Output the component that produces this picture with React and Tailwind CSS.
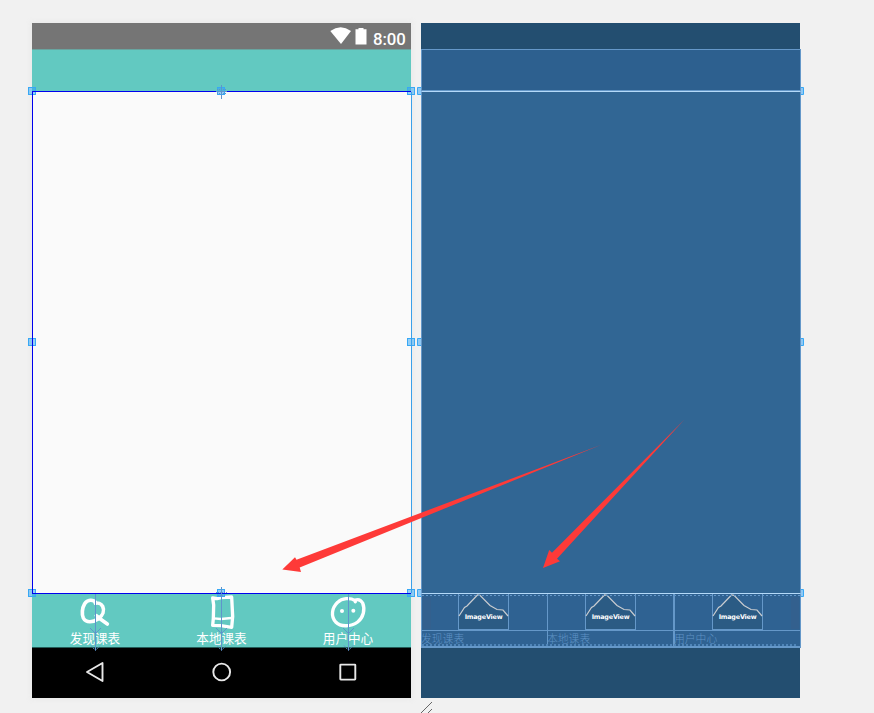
import React from "react";

const tabs = [
  { label: "发现课表", kind: "search" },
  { label: "本地课表", kind: "book" },
  { label: "用户中心", kind: "face" },
];

function TabIcon({ kind }) {
  const common = {
    className: "block h-[36px] w-[50px] shrink-0",
    fill: "none",
    stroke: "white",
    strokeLinecap: "round",
    strokeLinejoin: "round",
  };
  if (kind === "search")
    return (
      <svg viewBox="150 42 150 108" {...common} strokeWidth="11">
        <path d="M228 68C219 57 202 59 194 71C186 84 185 103 190 114C198 130 220 127 234 117C249 106 254 91 248 79C243 70 233 68 226 70" />
        <path d="M229 107L241 117L262 132" />
      </svg>
    );
  if (kind === "book")
    return (
      <svg viewBox="108 42 150 108" {...common} strokeWidth="10">
        <path d="M155 54L158 75L157 115L155 136L180 137L212 142L215 110L212 51L180 53L168 56L155 54" />
        <path d="M158 115L180 117L211 114" strokeWidth="7" />
      </svg>
    );
  return (
    <svg viewBox="99 42 150 108" {...common} strokeWidth="10">
      <path d="M194 61C181 53 156 54 143 67C125 84 122 109 137 126C152 142 184 140 203 126C220 113 226 88 218 69C212 59 203 57 194 61L196 65" />
      <circle cx="156" cy="93" r="6" fill="white" stroke="none" />
      <circle cx="190" cy="92" r="6" fill="white" stroke="none" />
    </svg>
  );
}

function StatusBar() {
  return (
    <div className="flex h-[27px] items-start justify-end border-b border-[#69a5a0] bg-[#757575] pr-[5px]">
      <svg className="mt-[4px] h-[18px] w-[38px] shrink-0" viewBox="0 0 38 18" fill="white">
        <path d="M.3 4Q10.7-3.4 21 4L11 17Z" />
        <path d="M25.5 2.2H28.5V1H33.5V2.2H36.5V17.5H25.5Z" />
      </svg>
      <span className="mt-[6px] ml-[5px] w-[33px] text-[16.8px] leading-[20px] font-medium tracking-[-0.1px] whitespace-nowrap text-white font-['Roboto',sans-serif]">
        8:00
      </span>
    </div>
  );
}

function Phone() {
  return (
    <section className="flex h-[675px] w-[379px] flex-col shadow-[0_0_5px_2px_#ebebeb]">
      <StatusBar />
      <div className="h-[41px] bg-[#62c9c1]" />
      <div className="h-[503px] border-y border-[#0000ee] bg-[#fafafa]" />
      <div className="grid h-[53px] grid-cols-[126px_127px_126px] bg-[#62c9c1]">
        {tabs.map((t) => (
          <div key={t.kind} className="flex flex-col items-center">
            <TabIcon kind={t.kind} />
            <span className="-mt-px text-[12.6px] leading-[17px] whitespace-nowrap text-white font-['Noto_Sans_CJK_SC',sans-serif]">
              {t.label}
            </span>
          </div>
        ))}
      </div>
      <div className="grid h-[51px] grid-cols-[126px_127px_126px] place-items-center border-t border-[#235c58] bg-black pb-[2px]">
        <svg className="h-[22px] w-[22px]" viewBox="0 0 22 22" fill="none" stroke="#e8e8e8" strokeWidth="1.9" strokeLinejoin="round">
          <path d="M3 11L18.5 2V20Z" />
        </svg>
        <svg className="h-[22px] w-[22px]" viewBox="0 0 22 22" fill="none" stroke="#e8e8e8" strokeWidth="1.9">
          <circle cx="10.7" cy="11" r="8.4" />
        </svg>
        <svg className="h-[22px] w-[22px]" viewBox="0 0 22 22" fill="none" stroke="#e8e8e8" strokeWidth="1.9">
          <rect x="3.3" y="3.6" width="15" height="15" rx=".5" />
        </svg>
      </div>
    </section>
  );
}

function ImagePlaceholder() {
  return (
    <div className="relative h-[36px] w-[51px] shrink-0">
      <svg className="block h-[36px] w-[51px]" viewBox="0 0 51 36">
        <path d="M.5 22L6.5 13L9 11.5L20 .5L22.5 1.5L32 11.5L39 15.5L45 16L50.5 22V35H.5Z" fill="#2b5b84" />
        <path d="M.5 0V35M50.5 0V35" stroke="#6598c9" fill="none" />
        <path d="M0 35.5H51" stroke="#6598c9" />
        <path d="M1 22L6.5 13.5L9 12L19.5 1L22 1.3L32 11.5L39 15.5L45 16L50 22" fill="none" stroke="#c9ccd0" strokeWidth="1.2" />
      </svg>
      <span className="absolute inset-x-0 top-[17px] text-center text-[6.4px] leading-[13px] font-bold tracking-[-0.2px] whitespace-nowrap text-white font-['DejaVu_Sans',sans-serif]">
        ImageView
      </span>
    </div>
  );
}

function Blueprint() {
  return (
    <section className="flex h-[675px] w-[380px] flex-col">
      <div className="mr-px h-[26px] bg-[#234e70]" />
      <div className="h-[41px] border border-b-0 border-[#6598c9] bg-[#2d608f]" />
      <div className="h-px bg-[#6598c9]" />
      <div className="h-[503px] border border-t-[#b4daf9] border-r-[#6598c9] border-b-[#b4daf9] border-l-[#6598c9] bg-[#316694]" />
      <div className="grid h-[54px] grid-cols-[126px_127px_127px] border-r border-b-2 border-[#6598c9] bg-[#2f6292]">
        {tabs.map((t) => (
          <div key={t.kind} className="flex flex-col border-l border-[#6598c9] first:[&>div]:pr-[2px]">
            <div className="flex h-[37px] justify-center border-b border-[#6598c9] pr-px">
              <ImagePlaceholder />
            </div>
            <span className="-ml-px text-[10.8px] leading-[15px] whitespace-nowrap text-[#5f93c5] font-['Noto_Sans_CJK_SC',sans-serif] font-light">
              {t.label}
            </span>
          </div>
        ))}
      </div>
      <div className="mr-px grow bg-[#234e70]" />
    </section>
  );
}

/* Selection outline, resize handles and constraint arrows drawn over the canvas. */
function Overlay() {
  const handles = [
    [28, 87], [217, 87], [407, 87],
    [28, 338], [407, 338],
    [28, 589], [217, 589], [407, 589],
  ];
  return (
    <svg className="pointer-events-none absolute inset-0 h-[713px] w-[874px]" viewBox="0 0 874 713" fill="none">
      {handles.map(([x, y]) => (
        <rect key={`${x}-${y}`} x={x + 0.5} y={y + 0.5} width="7" height="7" fill="#2ba3f6" fillOpacity=".5" stroke="#38a8f5" />
      ))}
      {[87, 338, 589].map((y) => (
        <g key={y} fill="#8fc9f5" stroke="#38a8f5">
          <path d={`M421 ${y + 0.5}H417.5V${y + 7.5}H421`} />
          <path d={`M801 ${y + 0.5}H803.5V${y + 7.5}H801`} />
        </g>
      ))}
      <path d="M32 91.5H411M32.5 91V594M32 593.5H411" stroke="#0000ee" />
      <path d="M411.5 92V593" stroke="#3aa0ea" />
      <g stroke="#5f94cc">
        <path d="M221.5 85V99M216 91.5H227" />
        <path d="M217 89.5H226M217 93.5H226" strokeDasharray="1 1" />
        <path d="M216 592.5H227M218 595.5H225" strokeDasharray="1 1" />
        <path d="M95.5 594V650M221.5 587V650M348.5 594V650" />
        {[95.5, 221.5, 348.5].map((x) => (
          <g key={x}>
            <path d={`M${x - 5.5} 628L${x} 633.5L${x + 5.5} 628`} />
            <path d={`M${x - 4.5} 645.5L${x} 650.5L${x + 4.5} 645.5`} strokeDasharray="2 1" />
          </g>
        ))}
      </g>
      <path d="M422 595.5H800" stroke="#6598c9" strokeDasharray="2 2" />
      <path d="M422 645H798" stroke="#4f85b8" strokeWidth="2" strokeDasharray="2 2" />
      <path d="M673.5 594V648" stroke="#6598c9" />
      <path d="M427 597V629M795 597V629" stroke="#3b5f88" strokeOpacity=".35" strokeWidth="8" />
      <g fill="#fe3a38">
        <path d="M282.3 569.6L295 557.3L296.5 559.8L602 444.5L299.7 567.5L301 572Z" />
        <path d="M543 568L549.2 550L552 552.7L684.5 419.5L557 558.7L560 561.2Z" />
      </g>
      <path d="M421 713L432 702M428 713L432 709" stroke="#666" />
    </svg>
  );
}

export default function App() {
  return (
    <main className="relative h-[713px] w-[874px] overflow-hidden bg-[#f1f1f1]">
      <div className="flex gap-[10px] pt-[23px] pl-[32px]">
        <Phone />
        <Blueprint />
      </div>
      <Overlay />
    </main>
  );
}
